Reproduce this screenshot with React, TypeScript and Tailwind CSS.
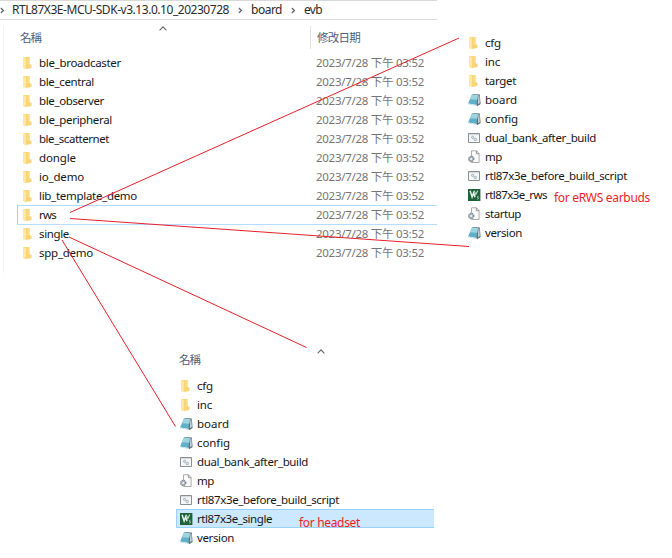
import React from "react";

type Kind = "folder" | "note" | "batch" | "config" | "project";

function FileIcon({ kind }: { kind: Kind }) {
  return (
    <svg width="14" height="14" viewBox="0 0 14 14" className="shrink-0">
      {kind === "folder" && (
        <g>
          <path d="M2.3 1h6.4v11H2.3z" fill="#f8d778" />
          <path d="M2.3 1l2.6 1v11.4l-2.6-1.2z" fill="#ffe8a2" />
          <path d="M7.6 1h1.3v7.4H7.6z" fill="#fbe3a0" />
          <path d="M4.9 8.5h5.6v3.6l-5.6.9z" fill="#f7d475" />
        </g>
      )}
      {kind === "note" && (
        <g>
          <path d="M5.2 1l7.6.5.8 9.6-3.6 2.2z" fill="#566971" />
          <path d="M11.4 2.2l1 .2.4 7.6-2 1.6z" fill="#c9d4d8" />
          <path d="M5 1.6l6 .5-1.6 10L1 10.6z" fill="#5fb0c9" />
          <path d="M5 1.6l6 .5-.8 4.6L2.8 6.3z" fill="#a0d3e0" />
          <path d="M1 10.6l8.4 1.5-.1.8L1.4 11.5z" fill="#cfe3e9" />
        </g>
      )}
      {kind === "batch" && (
        <g>
          <path d="M1.5 2.5h11v9h-11z" fill="#f7f8f9" stroke="#8a8f94" />
          <path d="M2 3.7h10" stroke="#cfd4d9" />
          <circle cx="5.6" cy="6.4" r="1.1" fill="#e0e6ed" stroke="#97a4b3" strokeWidth=".8" />
          <circle cx="8.3" cy="8.5" r="1.3" fill="#e0e6ed" stroke="#97a4b3" strokeWidth=".8" />
        </g>
      )}
      {kind === "config" && (
        <g>
          <path d="M4.5.8h5l2.6 2.7v9H4.5z" fill="#fcfcfc" stroke="#a0a0a0" strokeWidth=".9" />
          <path d="M9.4.9v2.8h2.7" fill="none" stroke="#8b8b8b" strokeWidth=".9" />
          <circle cx="4.2" cy="8.9" r="2.5" fill="#b5bdc4" stroke="#848d95" strokeWidth="1.5" strokeDasharray="1.3 .7" />
          <circle cx="4.2" cy="8.9" r="1" fill="#f6f8fa" />
        </g>
      )}
      {kind === "project" && (
        <g>
          <rect x="1" y="1" width="12.4" height="12" fill="#1f6138" />
          <path d="M3.1 2.8l2 6.2L6.6 4.8 8 9.2" fill="none" stroke="#e8f3eb" strokeWidth="1.5" />
          <path d="M7.3 2.8l1.5 3.8 2-4" fill="none" stroke="#c4dccb" strokeWidth="1.1" />
          <path d="M11.7 8L10 9.1l1.8 1.1-1.7 1.2" fill="none" stroke="#a5cdb1" strokeWidth=".9" />
        </g>
      )}
    </svg>
  );
}

function SortArrow() {
  return (
    <svg width="8" height="5" viewBox="0 0 8 5" fill="none" stroke="#666" strokeWidth="1.1">
      <path d="M.6 4.3L4 .9l3.4 3.4" />
    </svg>
  );
}

function Crumb() {
  return (
    <svg width="5" height="7" viewBox="0 0 5 7" fill="none" stroke="#666" strokeWidth="1.3">
      <path d="M.9 1l2.5 2.5L.9 6" />
    </svg>
  );
}

const folders: [string, string][] = [
  ["ble_broadcaster", "w-[82px]"],
  ["ble_central", "w-[55px]"],
  ["ble_observer", "w-[65px]"],
  ["ble_peripheral", "w-[73px]"],
  ["ble_scatternet", "w-[70px]"],
  ["dongle", "w-[37px]"],
  ["io_demo", "w-[45px]"],
  ["lib_template_demo", "w-[98px]"],
  ["rws", "w-[17px]"],
  ["single", "w-[30px]"],
  ["spp_demo", "w-[54px]"],
];

const earbudFiles: [string, Kind, string][] = [
  ["cfg", "folder", "w-[16px]"],
  ["inc", "folder", "w-[15px]"],
  ["target", "folder", "w-[31px]"],
  ["board", "note", "w-[32px]"],
  ["config", "note", "w-[33px]"],
  ["dual_bank_after_build", "batch", "w-[111px]"],
  ["mp", "config", "w-[17px]"],
  ["rtl87x3e_before_build_script", "batch", "w-[142px]"],
  ["rtl87x3e_rws", "project", "w-[62px]"],
  ["startup", "config", "w-[36px]"],
  ["version", "note", "w-[37px]"],
];

const headsetFiles: [string, Kind, string][] = [
  ["cfg", "folder", "w-[16px]"],
  ["inc", "folder", "w-[15px]"],
  ["board", "note", "w-[32px]"],
  ["config", "note", "w-[33px]"],
  ["dual_bank_after_build", "batch", "w-[111px]"],
  ["mp", "config", "w-[17px]"],
  ["rtl87x3e_before_build_script", "batch", "w-[142px]"],
  ["rtl87x3e_single", "project", "w-[75px]"],
  ["version", "note", "w-[37px]"],
];

/* Spreads the letters so that a label fills its column width exactly. */
function Label({ text, width }: { text: string; width: string }) {
  const box = React.useRef<HTMLSpanElement>(null);
  const inner = React.useRef<HTMLSpanElement>(null);
  const [gap, setGap] = React.useState(0);
  React.useLayoutEffect(() => {
    if (box.current && inner.current) {
      const room = box.current.getBoundingClientRect().width;
      const used = inner.current.getBoundingClientRect().width;
      setGap((room - used) / text.length);
    }
  }, [text]);
  return (
    <span ref={box} className={`block shrink-0 whitespace-nowrap ${width}`}>
      <span ref={inner} style={{ letterSpacing: gap }}>{text}</span>
    </span>
  );
}

export default function App() {
  return (
    <main className="relative h-[558px] w-[672px] overflow-hidden bg-white font-['Noto_Sans','Noto_Sans_CJK_TC',sans-serif] text-[11.5px] leading-[19px] text-[#161616]">
      <div className="flex h-[345px] items-start">
        <section className="w-[437px]">
          <header className="flex h-5 items-center border-y border-[#d9d9d9] text-[12px] leading-[18px] text-[#2a2a2a]">
            <Crumb />
            <div className="-mt-px ml-[7px]"><Label text="RTL87X3E-MCU-SDK-v3.13.0.10_20230728" width="w-[217px]" /></div>
            <div className="ml-[9px]"><Crumb /></div>
            <div className="-mt-px ml-[8px]"><Label text="board" width="w-[31px]" /></div>
            <div className="ml-[9px]"><Crumb /></div>
            <div className="-mt-px ml-[8px]"><Label text="evb" width="w-[18px]" /></div>
          </header>
          <div className="ml-[3px] mt-[6px] h-[247px] border-l border-[#f3f3f3]">
            <div className="flex h-[23px] text-[#4c607a]">
              <div className="w-[148px] pl-4 pt-[2px]"><Label text="名稱" width="w-[21px]" /></div>
              <div className="w-[158px] pl-[7px]"><SortArrow /></div>
              <div className="border-l border-[#e2e2e2] pl-[6px] pt-[2px]"><Label text="修改日期" width="w-[43px]" /></div>
            </div>
            <div className="ml-[13px] pt-[4px]">
              {folders.map(([name, width]) => (
                <div
                  key={name}
                  className={`flex h-[19px] items-center border-l pl-[3px] ${name === "rws" ? "border-l-[#99d1ff] shadow-[inset_0_1px_#b4dcff,0_1px_#b4dcff]" : "border-transparent"}`}
                >
                  <FileIcon kind="folder" />
                  <div className="ml-[4px] w-[277px]"><Label text={name} width={width} /></div>
                  <div className="text-[#757575]"><Label text="2023/7/28 下午 03:52" width="w-[108px]" /></div>
                </div>
              ))}
            </div>
          </div>
        </section>
        <section className="ml-[30px] mt-[33px]">
          {earbudFiles.map(([name, kind, width]) => (
            <div key={name} className="flex h-[19px] items-center">
              <FileIcon kind={kind} />
              <div className="ml-1"><Label text={name} width={width} /></div>
              {kind === "project" && (
                <div className="ml-[7px] pt-[5px] text-[12px] text-[#ed1c24]"><Label text="for eRWS earbuds" width="w-[96px]" /></div>
              )}
            </div>
          ))}
        </section>
      </div>
      <section className="ml-[176px] w-[258px]">
        <div className="flex h-[31px] text-[#4c607a]">
          <div className="w-[141px] pl-[3px] pt-[5px]"><Label text="名稱" width="w-[21px]" /></div>
          <div className="pt-[4px]"><SortArrow /></div>
        </div>
        {headsetFiles.map(([name, kind, width]) => (
          <div
            key={name}
            className={`flex h-[19px] items-center border-y border-l pl-[2px] ${kind === "project" ? "border-[#99d1ff] bg-[#cce8ff]" : "border-transparent"}`}
          >
            <FileIcon kind={kind} />
            <div className="ml-1"><Label text={name} width={width} /></div>
            {kind === "project" && (
              <div className="ml-[27px] pt-[8px] text-[12px] text-[#ed1c24]"><Label text="for headset" width="w-[61px]" /></div>
            )}
          </div>
        ))}
      </section>
      <svg className="pointer-events-none absolute left-0 top-0" width="672" height="558" stroke="#e5202a" strokeWidth="1" fill="none">
        <path d="M70 212.5L459 38M70 218.5L469 246.5M69 237L306.5 347.5M62 240L175.5 426.5" />
      </svg>
    </main>
  );
}
